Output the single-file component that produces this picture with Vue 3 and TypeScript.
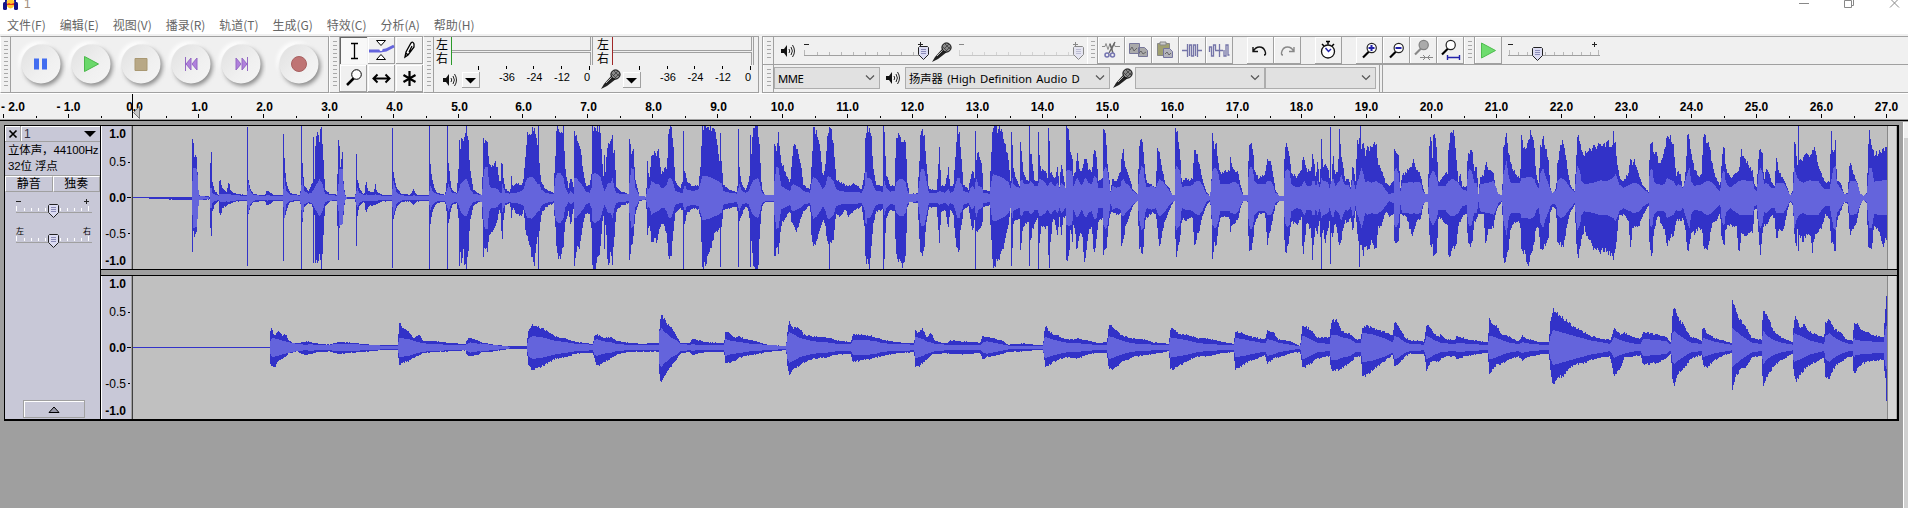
<script setup lang="ts">
type Point = [number, number, number, number]
interface Segment { offset: number; points: string; spikes?: string }

const menus = ['文件(F)', '编辑(E)', '视图(V)', '播录(R)', '轨道(T)', '生成(G)', '特效(C)', '分析(A)', '帮助(H)']
const transport = ['pause', 'play', 'stop', 'start', 'end', 'record']
const tools = ['select', 'envelope', 'draw', 'zoom', 'shift', 'multi']
const editGroups = [
  ['cut', 'copy', 'paste', 'trim', 'silence'],
  ['undo', 'redo'],
  ['clock'],
  ['zoomin', 'zoomout', 'zoomsel', 'zoomfit'],
]
const meterScale = ['-36', '-24', '-12', '0']
const secondWidth = 64.92
const ticks = Array.from({ length: 30 }, (_, i) => {
  const value = i - 2
  const x = Math.floor(133.4 + value * secondWidth)
  const shift = value === -2 ? 10 : value >= 0 && value < 10 ? 1.5 : 0.5
  return { x, textX: x + shift, label: value < 0 ? `- ${-value}.0` : `${value}.0` }
})
const halves = Array.from({ length: 29 }, (_, i) => Math.round(133.4 + (i - 1.5) * secondWidth))
const levels = [
  { label: '1.0', y: 11.8, bold: true, tick: 0 },
  { label: '0.5', y: 40.3, bold: false, tick: 36 },
  { label: '0.0', y: 75.8, bold: true, tick: 71 },
  { label: '-0.5', y: 111.8, bold: false, tick: 107 },
  { label: '-1.0', y: 138.8, bold: true, tick: 143 },
]

// Envelopes are stored in thirds of a pixel: x, top, bottom, RMS half height.
const upper: Segment[] = [
  {
    offset: 0,
    points: `396,238,240,0 440,238,241,0 480,237,244,1 574,237,246,1 577,70,398,50 580,84,345,90 583,112,352,90 590,125,335,85 593,185,290,60 596,232,248,6 628,236,244,2 631,140,330,30 634,108,358,30 637,190,280,15 643,218,262,10 655,230,250,6 658,190,282,10 661,186,292,12 668,212,270,12 680,222,262,10 686,187,260,12 690,215,258,10 700,225,252,8 740,232,248,5 745,185,290,45 750,210,265,20 760,228,252,8 795,232,248,5 800,215,262,8 812,225,258,6 820,232,250,5 848,232,248,5 853,125,300,60 858,190,280,20 870,225,252,8 900,232,248,6 907,140,310,60 912,200,270,20 925,220,255,12 935,195,260,15 943,180,290,30 946,75,430,35 955,40,440,50 958,65,400,55 962,24,453,50 967,75,400,40 971,150,330,25 975,215,265,12 990,228,250,8 1010,230,248,6 1015,70,432,40 1018,75,330,85 1021,140,320,85 1027,106,320,85 1030,190,290,40 1034,225,250,8 1040,238,242,2 1065,236,243,2 1071,180,300,30 1078,210,265,15 1092,230,250,7 1098,188,290,10 1104,220,265,8 1122,222,262,8 1125,196,260,10 1130,220,258,8 1145,230,250,6 1174,230,250,5 1180,165,300,50 1190,210,265,15 1205,228,252,7 1230,230,250,5 1240,215,262,7 1250,230,250,6 1285,231,249,6 1291,140,320,35 1298,195,275,18 1310,225,255,10 1335,230,250,8 1345,140,320,40 1355,215,262,15 1370,225,255,12 1375,150,300,20 1381,90,400,40 1385,40,440,45 1390,70,400,50 1395,35,450,55 1400,24,430,55 1405,70,400,40 1410,150,310,25 1420,215,262,12 1440,230,250,8`,
    spikes: '742,28,444 850,48,428 904,24,453 940,58,436 964,27,453 1068,108,384 1176,30,450 1288,24,453 1342,24,453 1378,65,445 1400,24,453',
  },
  {
    offset: 1440,
    points: `0,228,254,12 6,232,250,10 9,60,422,60 14,68,395,92 22,72,392,92 27,130,360,40 33,150,345,30 45,130,330,30 53,155,300,25 60,205,265,15 64,130,340,15 66,117,384,45 70,180,310,30 76,212,262,15 90,225,255,12 94,175,300,15 98,208,268,15 110,195,290,15 125,200,295,20 130,185,275,25 137,110,345,50 142,50,360,60 156,38,420,62 163,28,437,55 170,65,375,45 174,90,345,40 178,130,340,40 183,190,290,25 195,212,270,15 220,225,255,10 226,110,330,60 230,28,400,72 240,32,425,75 250,35,380,60 255,150,320,30 265,210,280,12 272,175,320,20 280,205,275,12 283,50,440,60 288,40,400,60 300,85,380,45 308,150,320,35 318,205,285,18 328,200,290,15 334,170,330,30 337,24,453,70 345,26,453,75 360,30,400,65 368,150,300,35 373,200,290,20 378,130,340,30 383,70,440,45 392,75,410,45 397,45,453,60 400,100,390,45 404,105,340,25 408,205,280,15 420,218,265,12 445,228,255,10 448,60,430,45 454,100,385,90 460,90,355,85 465,185,290,30 478,233,248,7 498,236,246,4 502,130,350,30 507,190,310,25 514,120,370,50 522,100,365,45 530,110,370,40 536,90,340,40 542,165,320,30 552,155,320,30 560,150,350,40 566,30,430,60 573,28,415,60 580,90,340,40 585,190,285,20 600,210,270,15 607,190,280,15 614,150,320,40 620,190,285,25 640,205,270,20 655,200,275,25 661,150,300,45 667,24,453,65 675,24,440,65 690,30,400,62 703,35,350,55 715,100,340,50 720,150,320,45 724,120,330,45 730,200,275,20 750,215,270,15 770,222,265,12 778,150,315,40 785,200,290,20 797,215,265,15 806,190,280,20 813,130,350,40 818,50,430,50 824,24,453,55 834,30,453,60 840,110,330,40 845,210,265,15 855,230,252,10 880,230,252,10 883,70,420,50 889,100,395,92 895,45,400,90 903,130,320,35 915,160,300,28 930,195,275,20 934,140,310,35 940,80,325,40 950,90,340,35 960,125,305,30 970,200,280,20 990,215,262,15 995,130,370,50 1000,28,395,62 1010,45,360,55 1020,90,340,40 1028,175,305,25 1035,155,315,35 1043,30,380,65 1052,28,380,60 1060,70,370,50 1068,185,285,25 1080,190,300,20 1095,200,275,18 1105,205,295,18 1120,195,280,18 1145,215,265,15 1153,165,330,35 1157,30,450,90 1162,35,430,60 1167,24,450,60 1173,50,400,55 1180,150,320,35 1188,200,280,20 1207,205,275,18 1213,45,420,50 1218,165,300,30 1230,205,275,18 1243,200,280,20 1248,70,410,45 1258,50,430,55 1268,65,453,55 1277,70,420,45 1281,190,270,20 1288,228,252,12 1312,226,255,10 1317,150,340,40 1322,40,420,85 1332,40,400,85 1339,130,310,50 1346,215,268,15 1370,215,268,15 1378,90,375,20 1383,200,280,18 1395,205,275,15 1405,150,330,25 1410,205,275,15 1420,200,290,20 1426,120,360,40 1432,24,400,60 1440,60,400,60`,
    spikes: '175,24,453 373,110,392 611,38,453 721,45,446 775,33,446 811,50,448 1048,28,453 1210,24,453',
  },
  {
    offset: 2880,
    points: `0,80,345,45 5,130,320,40 10,200,275,20 25,215,265,15 32,175,310,30 38,155,340,35 43,180,310,25 48,130,340,60 55,95,338,35 66,150,325,30 70,215,265,15 88,220,262,12 94,100,370,50 98,24,445,70 108,28,435,68 122,38,410,62 135,75,370,55 146,130,320,45 151,190,270,30 157,85,400,60 160,150,315,40 165,175,310,35 178,205,300,30 181,75,398,50 186,120,350,55 191,170,320,40 205,190,312,40 212,100,370,50 217,140,335,45 224,190,320,35 232,190,300,35 238,110,380,55 243,155,320,55 255,155,330,45 262,180,320,35 272,160,370,50 278,170,305,40 285,180,310,35 292,150,355,45 298,205,295,30 303,130,355,45 309,165,300,40 316,210,295,30 319,28,428,80 327,45,425,85 332,110,310,80 336,105,390,80 340,170,320,35 346,160,350,50 351,100,410,60 357,150,360,50 365,160,340,35 373,120,438,55 378,115,405,60 384,150,345,45 395,165,325,40 402,90,418,65 409,110,370,60 415,190,310,30 427,180,300,30 430,40,410,80 437,50,400,95 442,130,360,80 448,190,300,40 452,228,285,10 456,180,280,35 470,190,290,30 482,155,285,35 484,120,390,50 490,95,370,55 496,150,325,45 507,175,295,35 518,215,265,20 532,228,250,10 538,85,390,70 544,60,405,95 550,95,390,90 554,155,310,50 560,195,300,30 575,200,285,35 587,210,290,30 592,90,330,45 598,105,390,55 606,150,340,50 615,195,310,40 628,210,275,20 637,232,256,12 643,230,250,10 646,40,370,85 649,40,428,95 653,55,390,90 660,110,370,80 665,195,300,30 675,180,310,35 690,185,300,35 698,180,300,40 702,100,385,45 710,105,360,50 718,135,335,50 726,180,300,40 738,220,265,12 750,235,248,6 754,180,300,50 757,50,425,80 763,85,370,90 768,65,390,90 775,140,330,70 780,165,300,40 795,160,295,40 808,155,300,40 811,115,345,45 815,145,320,45 825,155,315,48 835,165,300,40 842,205,265,20 850,230,250,8 862,230,250,8 866,95,400,80 872,75,410,95 878,85,375,85 883,160,320,50 895,180,290,40 915,170,285,40 922,125,380,50 932,125,330,50 938,165,300,40 946,215,262,15 958,234,248,8 970,234,248,8 974,95,400,75 981,70,400,88 988,110,350,80 994,170,310,40 1010,175,320,30 1025,155,300,35 1028,100,434,45 1033,120,370,50 1040,155,315,35 1053,160,340,35 1057,115,415,50 1064,145,350,50 1067,185,330,30 1072,125,350,50 1079,200,300,30 1084,70,450,60 1088,145,320,50 1095,140,380,50 1104,150,330,45 1108,180,310,30 1114,185,350,50 1119,110,350,60 1125,170,310,35 1134,155,360,45 1138,34,378,50 1143,110,370,70 1149,150,330,50 1157,190,310,35 1163,175,315,40 1172,210,300,25 1178,140,340,60 1186,190,280,25 1192,55,350,50 1196,75,380,60 1204,100,380,90 1210,65,415,70 1215,110,380,45 1222,90,405,50 1235,90,370,45 1248,70,400,50 1254,140,330,45 1265,155,325,40 1275,190,280,25 1287,205,295,10 1300,190,290,15 1303,90,370,80 1308,110,375,90 1315,110,370,75 1321,210,290,20 1326,170,290,45 1340,160,300,45 1355,140,350,48 1360,125,345,45 1370,160,310,48 1382,170,300,45 1388,205,265,20 1395,228,253,12 1403,228,252,12 1408,80,350,60 1412,40,400,70 1417,120,380,80 1421,30,425,80 1430,85,400,60 1435,190,300,35 1440,190,295,35`,
    spikes: '46,40,453 154,42,444 208,24,444 235,42,453 265,30,412 268,70,450 1111,27,438 1198,60,446 1201,24,380',
  },
  {
    offset: 4320,
    points: `0,190,300,35 15,170,315,35 22,165,320,45 26,75,442,50 33,40,390,55 41,35,395,55 48,120,380,50 55,190,320,45 60,165,310,35 67,205,295,25 80,205,290,20 83,90,370,75 88,105,380,85 95,90,385,80 102,155,315,45 110,150,305,45 115,228,290,12 120,175,290,40 130,170,290,42 137,135,385,45 145,150,330,45 160,165,330,50 165,200,290,40 175,228,265,15 186,232,250,8 190,85,430,70 199,45,420,110 206,110,390,60 212,135,330,45 225,165,310,45 240,180,315,45 244,60,395,60 255,95,410,60 265,60,446,62 272,38,410,62 283,85,370,55 287,160,325,40 296,200,325,28 301,85,390,75 309,60,385,90 317,90,390,60 326,125,355,40 330,210,285,25 338,225,265,18 348,212,275,20 352,140,380,50 362,75,380,60 372,75,380,55 380,140,330,45 390,200,285,30 404,220,258,15 408,120,370,70 412,55,418,95 420,70,400,80 424,100,370,50 433,105,330,40 445,95,365,42 460,90,390,45 480,75,400,52 500,75,400,50 519,80,410,60 526,80,390,70 531,130,350,60 537,175,290,40 550,190,290,30 565,165,310,38 571,120,390,40 577,140,330,45 584,125,330,45 597,175,325,40 610,205,290,25 625,222,262,15 629,85,400,80 636,75,425,90 641,100,345,50 650,110,300,40 657,145,290,40 663,125,320,38 675,95,340,42 680,50,390,60 690,60,360,55 700,85,350,50 708,175,310,35 713,160,305,40 722,170,310,38 728,215,300,28 735,180,330,50 742,50,400,75 748,60,380,90 753,100,340,50 762,150,345,35 775,175,330,38 785,165,330,40 790,45,385,45 800,70,400,50 806,70,380,50 815,130,320,45 825,170,315,35 840,205,285,18 845,130,365,70 852,75,385,85 857,150,330,45 870,180,320,30 890,165,330,45 897,150,410,50 904,100,350,52 915,120,355,52 928,145,340,50 938,160,345,50 943,200,275,25 950,210,270,20 956,95,360,80 961,100,405,90 967,110,340,75 972,190,320,40 977,150,325,45 985,160,315,40 993,190,290,30 1003,205,300,30 1009,110,370,45 1015,160,340,45 1030,185,335,45 1040,205,285,28 1050,235,250,8 1058,215,260,15 1063,75,350,90 1068,90,400,70 1071,150,330,60 1079,125,360,50 1090,120,365,45 1100,95,350,50 1110,120,345,52 1117,85,400,50 1125,100,345,50 1135,140,340,50 1145,170,325,35 1155,195,290,25 1168,190,300,25 1172,75,350,45 1180,100,385,90 1186,70,400,95 1190,185,310,45 1200,190,285,30 1212,228,252,12 1223,225,258,12 1229,125,350,50 1237,155,335,50 1250,190,310,48 1260,225,262,20 1270,234,246,8 1280,225,255,12 1284,100,400,60 1288,40,390,90 1295,75,400,90 1302,105,320,48 1315,105,335,50 1328,95,385,52 1340,90,360,52`,
    spikes: '520,38,425 1075,24,398 1174,40,375',
  },
]
const lower: Segment[] = [
  {
    offset: 0,
    points: `396,687,689,0 809,687,689,0 811,635,740,20 815,632,748,28 822,650,745,27 828,650,745,26 835,635,728,24 848,655,722,20 857,648,715,18 868,670,705,15 890,677,700,10 915,670,712,8 930,671,708,9 950,676,703,8 990,680,700,8 1015,672,708,10 1040,673,705,10 1070,676,703,9 1110,680,700,7 1150,682,696,5 1194,682,696,5 1196,620,742,28 1201,612,741,28 1206,630,735,27 1225,640,730,25 1240,662,720,20 1256,650,712,15 1270,668,705,12 1300,669,702,10 1340,674,700,8 1396,678,697,8 1400,665,712,10 1409,658,715,15 1440,670,708,10`,
  },
  {
    offset: 1440,
    points: `0,672,704,12 30,678,702,8 60,682,697,5 90,684,693,2 140,684,693,2 144,640,740,25 155,620,757,33 180,628,748,32 205,640,735,25 225,655,722,20 260,663,717,15 290,672,706,10 338,678,705,8 342,655,715,20 350,648,745,25 370,658,735,18 395,658,720,15 410,668,710,10 440,673,702,8 480,677,701,8 536,675,701,8 538,630,770,50 544,585,797,57 555,608,770,45 575,632,742,28 590,655,722,20 602,675,706,10 628,675,702,8 636,662,712,9 655,666,706,8 680,673,702,8 732,675,701,8 736,640,735,25 745,640,735,22 760,658,730,18 775,655,720,17 800,664,714,12 830,671,708,10 870,682,701,6 918,683,696,5 922,640,745,35 927,608,768,45 940,630,755,40 956,628,742,30 970,648,735,25 1000,656,722,18 1040,658,718,15 1075,668,710,10 1112,672,708,10 1118,648,732,22 1140,649,728,22 1180,655,722,20 1210,666,713,12 1250,672,706,10 1302,677,702,8 1306,635,745,32 1313,648,748,30 1328,632,735,25 1340,658,725,18 1352,645,712,15 1365,668,708,10 1400,677,705,8 1410,667,708,8 1440,670,708,8`,
  },
  {
    offset: 2880,
    points: `0,670,710,8 60,674,705,6 68,652,724,15 80,658,716,18 100,660,714,14 130,670,707,8 145,680,702,5 190,676,700,5 220,680,697,5 249,682,696,5 252,640,720,25 256,625,745,32 275,645,736,24 300,656,722,18 320,664,718,14 355,662,722,12 385,668,708,10 415,675,705,6 440,673,705,6 446,625,755,35 452,622,754,32 465,632,750,28 480,650,735,22 515,662,718,12 550,664,712,10 580,673,708,8 626,677,700,6 631,633,750,30 640,630,755,28 655,648,745,26 685,650,728,20 710,660,715,14 740,660,716,10 780,670,706,8 820,678,702,6 826,640,755,28 850,645,740,25 870,655,730,20 915,665,712,12 922,636,738,25 940,642,720,20 955,664,718,14 990,670,706,8 1020,684,702,3 1027,620,750,35 1040,626,745,30 1055,640,735,22 1070,657,722,14 1108,658,715,10 1113,610,755,38 1130,604,758,38 1145,640,750,30 1170,648,735,25 1185,662,718,14 1202,664,715,12 1207,630,775,42 1218,622,775,42 1240,632,755,38 1270,640,732,28 1298,654,710,15 1303,612,745,35 1315,625,738,30 1335,658,715,15 1350,667,707,10 1392,670,708,8 1399,622,757,35 1410,625,735,30 1420,645,730,22 1440,658,730,15`,
  },
  {
    offset: 4320,
    points: `0,648,725,14 15,663,715,12 45,666,715,10 50,654,722,14 90,666,712,10 143,672,705,7 148,597,765,35 155,620,760,34 170,622,740,28 180,645,742,24 205,655,725,15 235,670,715,10 247,653,728,16 262,662,718,12 300,672,708,8 326,672,708,8 330,620,750,30 338,575,800,52 355,590,780,48 375,605,770,42 400,625,740,35 425,638,738,28 455,655,725,20 485,662,718,15 510,666,716,10 522,632,772,30 540,650,752,22 552,643,720,18 575,656,716,12 602,662,712,10 608,643,740,25 650,650,735,22 680,657,720,18 692,675,708,8 697,595,780,42 702,568,800,50 715,600,765,38 735,628,750,25 750,655,722,15 785,668,710,10 788,622,740,28 800,645,750,25 820,658,730,18 850,668,712,12 874,675,705,8 877,550,812,57 888,580,775,48 900,605,755,38 915,622,750,28 935,660,718,14 964,665,712,10 969,572,808,50 980,590,780,35 1000,638,745,22 1025,660,725,14 1057,672,708,8 1061,615,770,45 1067,595,790,40 1080,632,772,35 1092,615,755,30 1105,638,742,22 1130,650,730,15 1152,658,718,10 1156,615,780,35 1168,602,780,42 1185,635,745,28 1200,640,735,20 1220,665,720,12 1237,668,715,10 1241,620,770,30 1247,612,758,22 1265,635,738,20 1300,650,728,17 1330,658,725,16 1335,580,780,50 1340,560,800,68`,
    spikes: '877,546,815 1339,535,848',
  },
]

function noise(n: number): number {
  const v = Math.sin(n * 12.9898) * 43758.5453
  return v - Math.floor(v)
}

function buildWave(segments: Segment[], center: number, origin: number) {
  let peak = ''
  let rms = ''
  for (const segment of segments) {
    const points = segment.points.trim().split(/\s+/).map((p) => p.split(',').map(Number) as Point)
    const spikes = new Map<number, [number, number]>()
    for (const s of (segment.spikes ?? '').split(' ').filter(Boolean)) {
      const [x, top, bottom] = s.split(',').map(Number)
      spikes.set(Math.floor(x / 3), [top, bottom])
    }
    let i = 0
    const last = Math.min(1440, points[points.length - 1][0])
    for (let col = Math.floor(points[0][0] / 3); col * 3 < last; col++) {
      const x = col * 3 + 1
      while (i < points.length - 2 && points[i + 1][0] <= x) i++
      const a = points[i]
      const b = points[i + 1]
      const t = Math.max(0, Math.min(1, (x - a[0]) / (b[0] - a[0])))
      const mix = (k: number) => a[k] + (b[k] - a[k]) * t
      const px = col + segment.offset / 3 - 132
      let top = center + (mix(1) - center) * (1.06 - 0.13 * noise(px))
      let bottom = center + (mix(2) - center) * (1.06 - 0.13 * noise(px + 999))
      const spike = spikes.get(col)
      if (spike) {
        top = spike[0]
        bottom = spike[1]
      }
      const y1 = Math.max(0, Math.round((top - origin) / 3))
      const y2 = Math.min(143, Math.max(y1 + 1, Math.round((bottom - origin) / 3)))
      peak += `M${px} ${y1}h1V${y2}h-1z`
      const half = mix(3)
      if (half > 2) {
        const r1 = Math.max(y1, Math.round((center - half - origin) / 3))
        const r2 = Math.min(y2, Math.round((center + half + 1 - origin) / 3))
        if (r2 > r1) rms += `M${px} ${r1}h1V${r2}h-1z`
      }
    }
  }
  return { peak, rms }
}

const channels = [buildWave(upper, 239, 24), buildWave(lower, 688, 474)]
</script>

<template>
  <div class="window">
    <svg class="defs" width="0" height="0">
      <defs>
        <linearGradient id="knob" x1="0" y1="0" x2="1" y2="1">
          <stop offset=".15" stop-color="#e4e4e4" /><stop offset=".6" stop-color="#f0f0f0" /><stop offset=".9" stop-color="#f4f4f4" />
        </linearGradient>
        <symbol id="speaker" viewBox="0 0 14 14">
          <path d="M0 5h3l3-4v12l-3-4H0z" fill="#111" />
          <path d="M8 5q1.5 2 0 4M10 3q2.8 4 0 8M11.5 1q4 6 0 12" fill="none" stroke="#222" />
        </symbol>
        <symbol id="mic" viewBox="0 0 20 20">
          <path d="M0 20l3-5 8-9 4 4-9 7z" fill="#222" />
          <path d="M5 14l6-6" stroke="#bbb" />
          <circle cx="14.5" cy="5.5" r="4.6" fill="#888" stroke="#000" />
          <path d="M11 5l5 5M13 2l5 5M12 7l5-5M14 9l4-4" stroke="#333" stroke-width=".7" />
        </symbol>
        <symbol id="thumb" viewBox="0 0 11 14">
          <path d="M1.5 .5h8l1 1v7l-5 5-5-5v-7z" fill="#dcdcf2" stroke="#222" />
          <path d="M3 3.5h5M3 5.500h5M3 7.500h5" stroke="#8c8cb8" />
        </symbol>
        <symbol id="lens" viewBox="0 0 26 26">
          <path d="M7 18.500l6-6" stroke="#000" stroke-width="2.200" />
          <circle cx="15.700" cy="9" r="4.600" fill="#fff" stroke="#222" stroke-width="1.200" />
        </symbol>
        <symbol id="lens-grey" viewBox="0 0 26 26">
          <path d="M7 18.500l6-6" stroke="#888" stroke-width="2.200" />
          <circle cx="15.700" cy="9" r="4.600" fill="#aaa" stroke="#808080" stroke-width="1.200" />
        </symbol>
      </defs>
    </svg>

    <header class="title">
      <svg class="logo" width="15" height="11" viewBox="0 0 15 11">
        <path d="M2 5V0h2v5M11 5V0h2v5" fill="#16169a" />
        <ellipse cx="7.500" cy="3.500" rx="4" ry="5" fill="#ffc832" />
        <path d="M4 4l2-1 2 1 3-1v2H4z" fill="#e8301c" />
        <rect y="2" width="4" height="8" rx="1.500" fill="#141488" /><rect x="11" y="2" width="4" height="8" rx="1.500" fill="#141488" />
      </svg>
      <span class="caption">1</span>
      <svg class="controls" width="104" height="12" viewBox="0 0 104 12" fill="none" stroke="#888">
        <path d="M1 3.500h10M46.500 .5h7v7h-7zM55.500 0v5.500h-2M92 7.500l9-9M92-1.500l9 9" />
      </svg>
    </header>
    <nav class="menu"><span v-for="m in menus" :key="m">{{ m }}</span></nav>

    <section class="toolbars">
      <i class="grip tall" />
      <div class="transport">
        <svg v-for="name in transport" :key="name" :class="name" width="50" height="54" viewBox="0 .5 50 54">
          <circle cx="22.500" cy="25" r="19.500" class="glow" />
          <circle cx="27" cy="30" r="19.500" class="shade" />
          <circle cx="25" cy="27.500" r="19.500" class="face" fill="url(#knob)" />
          <path v-if="name === 'pause'" d="M18 22h5v11h-5zM26 22h5v11h-5z" fill="#426df0" />
          <path v-else-if="name === 'play'" d="M18.500 20l14 7.500-14 7.500z" fill="#6ad86a" stroke="#4bb84b" />
          <path v-else-if="name === 'stop'" d="M19 22h12v12H19z" fill="#b8a886" stroke="#a99872" />
          <path v-else-if="name === 'start'" d="M19.500 20.500v14M25 21.500v12l-5-6zM31 21.500v12l-5-6z" fill="#b080dc" stroke="#9468c4" />
          <path v-else-if="name === 'end'" d="M31.500 20.500v14M20 21.500v12l5-6zM26 21.500v12l5-6z" fill="#b080dc" stroke="#9468c4" />
          <circle v-else cx="25" cy="27.500" r="7.500" fill="#bf7474" stroke="#a86060" />
        </svg>
      </div>
      <i class="grip tall" />
      <div class="tools">
        <svg v-for="name in tools" :key="name" :class="['cell', { pressed: name === 'select' }]" width="27" height="27" viewBox="0 0 27 27" fill="none" stroke="#000">
          <path v-if="name === 'select'" d="M11 6.500h7M11 21.500h7M14.500 6v15" stroke-width="1.300" />
          <template v-else-if="name === 'envelope'">
            <path d="M1 14h11l6-1 8-4" stroke="#6464dc" stroke-width="3" />
            <path d="M8.500 3.500h9l-4.500 5zM8.500 22.500h9l-4.500-5z" fill="#fff" /><circle cx="13" cy="12.500" r="1.500" fill="#fff" stroke="none" />
          </template>
          <path v-else-if="name === 'draw'" d="M9 20l1-5 5-9q2-2 3 1v3l-6 8zM13 15l3-6M10 16l2 2" fill="#fff" stroke-width="1.300" />
          <template v-else-if="name === 'zoom'">
            <path d="M7 20l8-8" stroke-width="2.500" /><circle cx="16.500" cy="9.500" r="4.800" fill="#fff" />
          </template>
          <path v-else-if="name === 'shift'" d="M6 13.500h15M9.500 9.500l-4 4 4 4M17.500 9.500l4 4-4 4" stroke-width="2" />
          <path v-else d="M13.500 6v15M7.500 10l12 7M7.500 17l12-7" stroke-width="2.200" />
        </svg>
      </div>
      <i class="grip tall" />
      <div class="meters">
        <div v-for="kind in ['play', 'rec']" :key="kind" :class="['meter', kind]">
          <div class="meter-top">
            <div class="sides"><span>左</span><span>右</span></div>
            <div class="bars"><i /><i /></div>
          </div>
          <div class="meter-bottom">
            <svg class="device" :width="kind === 'play' ? 14 : 20" :height="kind === 'play' ? 14 : 20"><use :href="kind === 'play' ? '#speaker' : '#mic'" /></svg>
            <svg class="drop" width="18" height="16"><path d="M3 6h11l-5.500 5.500z" /></svg>
            <svg class="db" width="120" height="26" viewBox="0 0 120 26">
              <path d="M6.500 0v4M34.500 0v3M61.500 0v3M89.500 0v3M117.500 0v4" stroke="#000" />
              <text v-for="(d, i) in meterScale" :key="d" :x="i === 3 ? 115 : 35 + i * 27.500" y="15">{{ d }}</text>
            </svg>
          </div>
        </div>
      </div>
      <div class="stack">
        <div class="row first">
          <i class="grip" />
          <div class="mixer">
            <template v-for="kind in ['out', 'in']" :key="kind">
              <svg :class="['mix-icon', kind]" :width="kind === 'out' ? 14 : 20" :height="kind === 'out' ? 14 : 20"><use :href="kind === 'out' ? '#speaker' : '#mic'" /></svg>
              <svg :class="['mix-slider', kind]" width="126" height="20" viewBox="0 0 126 20">
                <path d="M0 2.500h5M114 2.500h5M116.500 0v5" class="sign" />
                <path d="M0 13.500h124" stroke="#a0a0a0" />
                <path d="M.5 8v5M13.500 10v3M25.500 10v3M37.500 10v3M49.500 10v3M61.500 10v3M73.500 10v3M85.500 10v3M97.500 10v3M109.500 10v3M121.500 8v5" stroke="#b8b8b8" />
                <use href="#thumb" x="114" y="4" width="11" height="14" />
              </svg>
            </template>
          </div>
          <i class="grip" />
          <div class="edit">
            <div v-for="(group, gi) in editGroups" :key="gi" class="group">
              <svg v-for="name in group" :key="name" class="cell" width="27" height="27" viewBox="0 0 27 27" fill="none">
                <template v-if="name === 'cut'">
                  <path d="M4 9.500h3l1-3 2 6 2-6 2 6 2-6 1 3h5" stroke="#888" /><path d="M17 5l-6 11M12 7l3 9" stroke="#666" stroke-width="1.400" />
                  <circle cx="9" cy="18" r="2" stroke="#7474b0" stroke-width="1.500" /><circle cx="14.500" cy="18" r="2" stroke="#7474b0" stroke-width="1.500" />
                </template>
                <template v-else-if="name === 'copy'">
                  <path d="M4.500 6.500h10v10h-10zM13.500 10.500h6l3 3v6h-9z" fill="#aaa" stroke="#77779a" /><path d="M5 13l2-3 2 4 3-3M14 16l2-2 2 3 3-2" stroke="#666" />
                </template>
                <template v-else-if="name === 'paste'">
                  <path d="M5.500 6.500h12v12h-12z" fill="#a0a070" stroke="#888" /><path d="M8 5h6v3H8z" fill="#ccc" stroke="#888" />
                  <path d="M11.500 11.500h6l3 3v6h-9z" fill="#b4b4bc" stroke="#7474a0" /><path d="M13 17l2-2 2 3 2-2" stroke="#666" />
                </template>
                <path v-else-if="name === 'trim'" d="M3 13.500h5M8.500 7v13M10.500 19V8h2v11h2V8h2v11M18.500 7v13M19 13.500h4" stroke="#7474a8" stroke-width="1.300" />
                <path v-else-if="name === 'silence'" d="M3.500 15v-5h2v9h2V8h2v5M9 13.500h8M13.500 7v13M18 13v6h2V8h2v10h1.500" stroke="#7474a8" stroke-width="1.300" />
                <path v-else-if="name === 'undo'" d="M6 10v4.500h5M6.500 14q2-4 6-4t5.500 4-1 4" stroke="#111" stroke-width="1.400" />
                <path v-else-if="name === 'redo'" d="M20 10v4.500h-5M19.500 14q-2-4-6-4t-5.500 4 1 4" stroke="#888" stroke-width="1.400" />
                <template v-else-if="name === 'clock'">
                  <circle cx="13" cy="14.500" r="6.500" fill="#fff" stroke="#111" stroke-width="1.300" /><path d="M11 4.500h4M13 4.500v3M7 7l2 2M19 7l-2 2" stroke="#000" stroke-width="1.500" /><path d="M10.500 11l3 3.500 2.500-2.500" stroke="#22a" stroke-width="1.500" />
                </template>
                <template v-else>
                  <use v-if="name === 'zoomsel'" href="#lens-grey" x="-2" y="-1" width="26" height="26" />
                  <use v-else href="#lens" :x="name === 'zoomfit' ? -2 : 0" :y="name === 'zoomfit' ? -1 : 2" width="26" height="26" />
                  <path v-if="name === 'zoomin'" d="M12.500 11h6M15.500 8v6" stroke="#22a" stroke-width="2" />
                  <path v-if="name === 'zoomout'" d="M12.500 11h6" stroke="#22a" stroke-width="2" />
                  <path v-if="name === 'zoomsel'" d="M10 20.500h13M13 18l2.500 2.500L13 23M20 18l-2.500 2.500L20 23" stroke="#888" />
                  <path v-if="name === 'zoomfit'" d="M10.500 18v5M22.500 18v5M10 20.500h13" stroke="#22a" stroke-width="1.400" />
                </template>
              </svg>
            </div>
          </div>
          <i class="grip" />
          <svg class="cell play-speed" width="27" height="27" viewBox="0 0 27 27"><path d="M6.500 6l14 7.500L6.500 21z" fill="#6edc6e" stroke="#4ebc4e" /></svg>
          <svg class="speed" width="94" height="20" viewBox="0 0 94 20">
            <path d="M0 2.500h5M84 2.500h5M86.500 0v5" class="sign" />
            <path d="M0 13.500h92" stroke="#a0a0a0" />
            <path d="M1.500 8v5M10.500 10v3M19.500 10v3M37.500 10v3M46.500 10v3M55.500 10v3M64.500 10v3M73.500 10v3M82.500 10v3M90.500 8v5" stroke="#b8b8b8" />
            <use href="#thumb" x="24" y="5" width="11" height="14" />
          </svg>
        </div>
        <div class="row second">
          <i class="grip" />
          <div class="combo host"><span>MME</span><svg width="10" height="6"><path d="M1 .5l4 4 4-4" /></svg></div>
          <svg class="dev-out" width="14" height="14"><use href="#speaker" /></svg>
          <div class="combo output"><span>扬声器 (High Definition Audio D</span><svg width="10" height="6"><path d="M1 .5l4 4 4-4" /></svg></div>
          <svg class="dev-in" width="20" height="20"><use href="#mic" /></svg>
          <div class="combo input"><span /><svg width="10" height="6"><path d="M1 .5l4 4 4-4" /></svg></div>
          <div class="combo chans"><span /><svg width="10" height="6"><path d="M1 .5l4 4 4-4" /></svg></div>
          <i class="rest" />
        </div>
      </div>
    </section>

    <svg class="timeline" width="1908" height="25" viewBox="0 0 1908 25">
      <text v-for="t in ticks" :key="t.label" :x="t.textX" y="17">{{ t.label }}</text>
      <rect v-for="t in ticks" :key="'m' + t.x" :x="t.x === 133 ? 132 : t.x" y="20" width="1" height="4" />
      <rect v-for="x in halves" :key="'h' + x" :x="x" y="22" width="1" height="2" />
      <rect x="132" y="0" width="1" height="24" />
      <path d="M133.500 18.500l6-6v12z" fill="#c8c8c8" stroke="#777" />
    </svg>

    <main class="project">
      <div class="track">
        <aside class="panel">
          <div class="name-row">
            <svg class="close" width="15" height="15"><path d="M4.500 4.500l7 7M11.500 4.500l-7 7" stroke="#000" stroke-width="1.700" /></svg>
            <div class="name"><span>1</span><svg width="12" height="6"><path d="M0 0h12L6 6z" /></svg></div>
          </div>
          <div class="info"><span>立体声，44100Hz</span><span>32位 浮点</span></div>
          <div class="mute"><span>静音</span><span>独奏</span></div>
          <svg v-for="kind in ['gain', 'pan']" :key="kind" class="slider" width="80" height="30" viewBox="0 0 80 30">
            <path v-if="kind === 'gain'" d="M1 9.500h5M69 9.500h5M71.500 7v5" stroke="#222" />
            <template v-else><text x="1" y="12">左</text><text x="68" y="12">右</text></template>
            <path d="M1 20.500h76" stroke="#a0a0a0" />
            <path d="M1.500 14v5M9.500 16v3M16.500 16v3M23.500 16v3M30.500 16v3M45.500 16v3M52.500 16v3M59.500 16v3M66.500 16v3M73.500 14v5" stroke="#fff" />
            <use href="#thumb" x="33" y="12" width="11" height="14" />
          </svg>
          <button class="collapse"><svg width="12" height="7"><path d="M1 6.500h10L6 1z" fill="#9898a8" stroke="#000" /></svg></button>
        </aside>
        <div class="channels">
          <div v-for="(c, i) in channels" :key="i" class="channel">
            <div class="scale">
              <svg width="29" height="143" viewBox="0 0 29 143">
                <template v-for="l in levels" :key="l.label">
                  <text x="24" :y="l.y" :class="{ bold: l.bold }">{{ l.label }}</text>
                  <rect v-if="l.tick > 0 && l.tick < 143" :x="l.bold ? 25 : 26" :y="l.tick" :width="l.bold ? 4 : 2" height="1" />
                </template>
              </svg>
            </div>
            <svg class="wave" width="1755" height="143" viewBox="0 0 1755 143" shape-rendering="crispEdges">
              <path :d="c.peak" fill="#3232c8" /><path :d="c.rms" fill="#6464dc" />
              <rect width="1" height="143" fill="#404040" />
            </svg>
            <i class="tail" />
          </div>
        </div>
      </div>
      <div class="scroll"><i /></div>
    </main>
  </div>
</template>

<style>
body { margin: 0; overflow: hidden; }
</style>
<style scoped>
* { box-sizing: border-box; }
svg { display: block; flex: none; }
.defs { position: absolute; }
.window { width: 1908px; height: 508px; overflow: hidden; background: #fff; font: 12px "Liberation Sans", "Noto Sans CJK SC", sans-serif; color: #000; }
.title { display: flex; height: 16px; padding-left: 3px; overflow: hidden; }
.caption { margin-left: 6px; width: 20px; line-height: 9px; color: #a08c78; }
.controls { margin-left: auto; margin-right: 6px; }
.menu { display: flex; gap: 13.900px; height: 18px; padding-left: 7px; color: #666; font: 12px/18px "Noto Sans CJK SC", sans-serif; }
.menu span { white-space: nowrap; }
.toolbars { display: flex; height: 60px; background: #f0f0f0; padding-top: 2px; border-bottom: 1px solid #fff; }
.toolbars > * { border-top: 1px solid #a0a0a0; border-bottom: 1px solid #a0a0a0; height: 57px; flex: none; }
.grip { width: 11px; flex: none; border-right: 1px solid #a0a0a0; border-left: 1px solid #fff; background: repeating-linear-gradient(#a8a8a8 0 1px, #f0f0f0 1px 4px) 3px 4px / 4px calc(100% - 7px) no-repeat; }
.transport { width: 318px; display: flex; padding-left: 5px; border-right: 1px solid #a0a0a0; }
.transport .record { margin-left: 8px; }
.glow { fill: #fff; filter: blur(2px); }
.shade { fill: #8c8c8c; filter: blur(2px); }
.face { filter: blur(.5px); }
.tools { width: 83px; display: grid; grid-template-columns: 27px 27px 27px; grid-template-rows: 27px 27px; gap: 1px; }
.cell { box-shadow: inset -1px -1px #a0a0a0, inset 1px 1px #fff; }
.pressed { background: #f8f8f8; box-shadow: inset 1px 1px #666; }
.meters { width: 325px; display: flex; border-right: 1px solid #a0a0a0; padding-left: 2px; }
.meter { width: 161px; }
.meter-top { display: flex; height: 28px; }
.sides { width: 15px; display: flex; flex-direction: column; font: 12px/14px "Noto Sans CJK SC", sans-serif; }
.bars { width: 142px; border-left: 1px solid #2a9a2a; border-right: 1px solid #a0a0a0; }
.rec .bars { border-left-color: #a02828; }
.bars i { display: block; width: 139px; height: 14px; border-right: 1px solid #a0a0a0; border-bottom: 1px solid #a0a0a0; }
.bars i + i { margin-top: 1px; border-top: 1px solid #a0a0a0; border-bottom: 0; height: 13px; }
.meter-bottom { display: flex; height: 27px; }
.device { margin: 8px 5px 0 7px; }
.rec .device { margin: 4px 2px 0 4px; }
.drop { margin-top: 7px; box-shadow: inset -1px -1px #a0a0a0, inset 1px 1px #fff; }
.db { margin-left: -8px; margin-top: 1px; }
.db text { font-size: 11px; text-anchor: middle; }
.toolbars > .stack { flex: 1; margin-left: 3px; border-left: 1px solid #a0a0a0; }
.row { display: flex; }
.first { height: 28px; border-bottom: 1px solid #a0a0a0; }
.second { height: 27px; }
.mixer { width: 313px; display: flex; }
.mix-icon.out { margin: 7px 9px 0 7px; }
.mix-icon.in { margin: 5px 7px 0 2px; }
.mix-slider { margin-top: 5px; }
.mix-slider.in { opacity: .5; }
.sign { stroke: #222; }
.edit { display: flex; gap: 14px; width: 366px; }
.group { display: flex; }
.speed { margin: 5px 0 0 6px; }
.combo { height: 22px; margin-top: 2px; padding: 0 4px 0 3px; border: 1px solid #adadad; background: #e1e1e1; display: flex; align-items: center; justify-content: space-between; font: 11.300px "Noto Sans", "Noto Sans CJK SC", sans-serif; white-space: nowrap; }
.combo path { fill: none; stroke: #555; stroke-width: 1.200; }
.host { width: 106px; }
.host span { letter-spacing: -.5px; }
.dev-out { margin: 6px 5px 0 6px; }
.output { width: 205px; word-spacing: 1.300px; }
.dev-in { margin: 3px 2px 0 3px; }
.input { width: 130px; }
.chans { width: 111px; }
.rest { width: 4px; margin-left: 3px; border: 0 solid #a0a0a0; border-width: 0 1px; }
.timeline { background: #f0f0f0; font: bold 12px "Liberation Sans", sans-serif; text-anchor: middle; }
.project { display: flex; height: 389px; background: #9f9f9f; border-top: 1px solid #a0a0a0; box-shadow: inset 0 1px #000; padding-left: 4px; }
.track { width: 1895px; height: 296px; margin-top: 5px; display: flex; border: 1px solid #000; border-width: 1px 2px 2px 1px; }
.panel { width: 96px; display: flex; flex-direction: column; background: #c8c8d7; border-right: 1px solid #000; }
.name-row { display: flex; height: 16px; border-bottom: 1px solid #a0a0a0; }
.close { box-shadow: inset 1px 1px #fff; }
.name { display: flex; flex: 1; align-items: center; justify-content: space-between; border-left: 1px solid #a0a0a0; padding: 0 4px 0 3px; box-shadow: inset 1px 1px #fff; color: #303040; }
.info { height: 34px; display: flex; flex-direction: column; padding-left: 3px; border-bottom: 1px solid #a0a0a0; font: 11.500px/16px "Liberation Sans", "Noto Sans CJK SC", sans-serif; white-space: nowrap; letter-spacing: -.15px; overflow: hidden; }
.mute { display: flex; height: 16px; }
.mute span { flex: 1; border: 1px solid #a0a0a0; border-left-color: #fff; border-top-color: #fff; text-align: center; font: 12px/12px "Noto Sans CJK SC", sans-serif; }
.slider { margin-left: 10px; font: 8px "Noto Sans CJK SC", sans-serif; }
.collapse { margin: auto 0 1px 18px; width: 62px; height: 18px; padding: 0; display: grid; place-items: center; background: #c8c8d7; border: 1px solid #a0a0a0; box-shadow: inset 1px 1px #fff; }
.channels { flex: 1; }
.channel { display: flex; height: 143px; background: #d6d6d6; }
.channel + .channel { height: 150px; padding-top: 7px; background: linear-gradient(#000 0 1px, #9f9f9f 1px 6px, #000 6px 7px, #d6d6d6 7px); }
.scale { width: 31px; height: 143px; background: #c8c8d7; border-left: 1px solid #fff; border-right: 1px solid #a0a0a0; }
.scale text { text-anchor: end; }
.bold { font-weight: bold; }
.wave { background: #c0c0c0; }
.tail { flex: 1; border-left: 1px solid #888; border-right: 1px solid #aaa; }
.scroll { margin-left: auto; margin-top: 2px; width: 5px; background: #d0d0d0; border-left: 1px solid #fff; }
.scroll i { display: block; height: 16px; background: #f0f0f0; }
</style>
